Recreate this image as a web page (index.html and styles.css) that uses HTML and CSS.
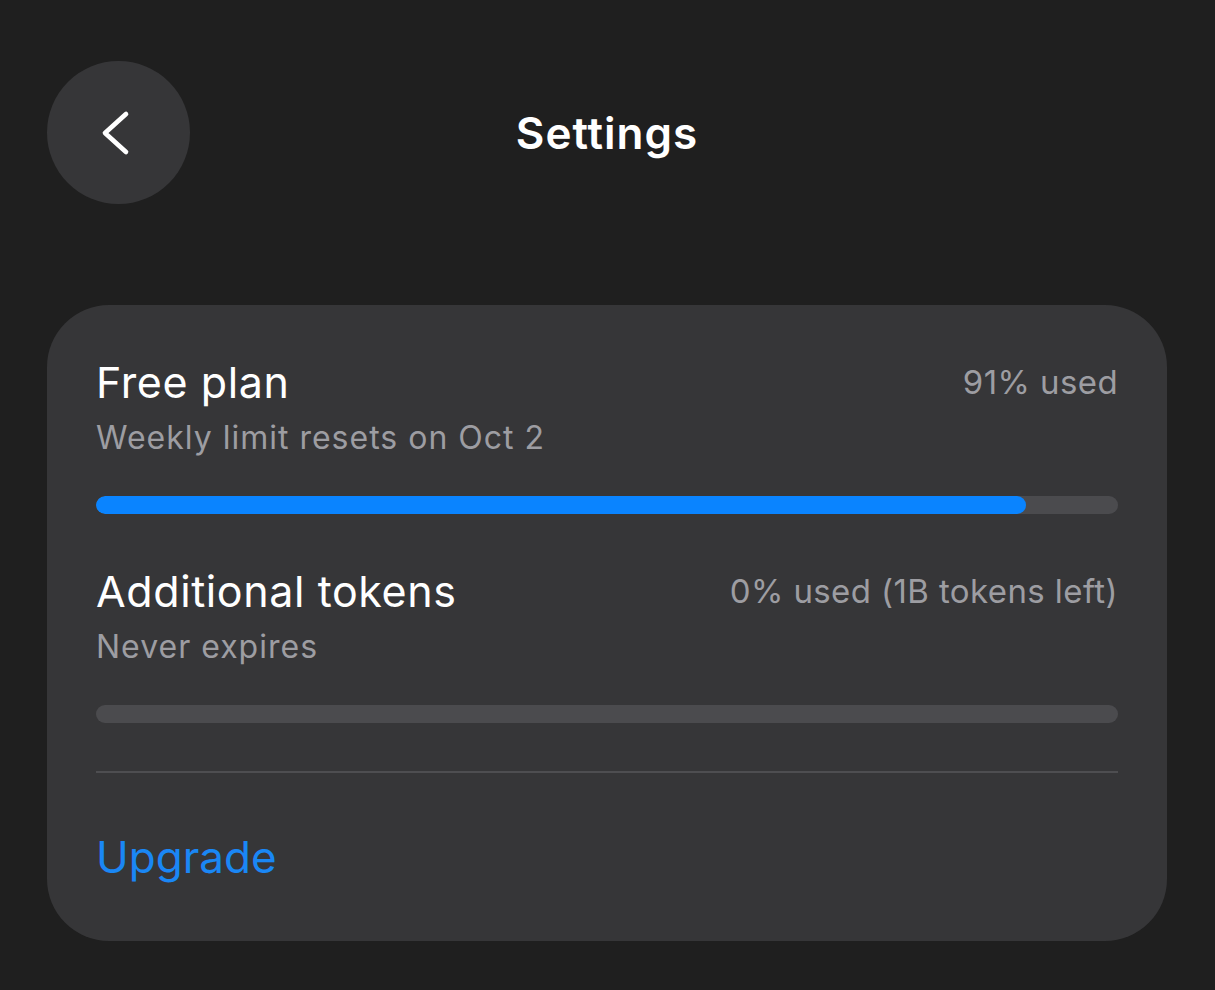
FILE: index.html
```html
<!DOCTYPE html>
<html lang="en">
<head>
<meta charset="utf-8">
<title>Settings</title>
<link rel="stylesheet" href="styles.css">
</head>
<body>
<div class="page">
  <header class="header">
    <button class="back" aria-label="Back">
      <svg viewBox="0 0 30 48" width="30" height="48" aria-hidden="true">
        <path d="M26 5 L5 24 L26 43" fill="none" stroke="#ffffff" stroke-width="4.7" stroke-linecap="round" stroke-linejoin="round"/>
      </svg>
    </button>
    <h1 class="title">Settings</h1>
    <div class="spacer"></div>
  </header>

  <section class="card">
    <div class="usage">
      <div class="usage-head">
        <span class="usage-name">Free plan</span>
        <span class="usage-value">91% used</span>
      </div>
      <div class="usage-sub">Weekly limit resets on Oct 2</div>
      <div class="bar"><div class="bar-fill" style="width: 91%"></div></div>
    </div>
    <div class="usage">
      <div class="usage-head">
        <span class="usage-name">Additional tokens</span>
        <span class="usage-value">0% used (1B tokens left)</span>
      </div>
      <div class="usage-sub">Never expires</div>
      <div class="bar"><div class="bar-fill" style="width: 0%"></div></div>
    </div>
    <div class="divider"></div>
    <a class="upgrade" href="#">Upgrade</a>
  </section>
</div>
</body>
</html>
```

FILE: styles.css
```css
html, body {
  margin: 0;
  padding: 0;
  background: #1f1f1f;
}

body {
  font-family: Inter, "Noto Sans", "Liberation Sans", sans-serif;
  color: #ffffff;
  -webkit-font-smoothing: antialiased;
}

.page {
  padding: 61px 48px 0 47px;
}

.header {
  display: grid;
  grid-template-columns: 143px 1fr 143px;
  align-items: center;
  height: 143px;
}

.back {
  width: 143px;
  height: 143px;
  border-radius: 50%;
  border: none;
  background: #363638;
  display: flex;
  align-items: center;
  justify-content: center;
  padding: 0;
  cursor: pointer;
}

.back svg {
  display: block;
  margin-right: 7px;
}

.title {
  margin: 0;
  text-align: center;
  font-size: 44px;
  font-weight: 600;
  line-height: 52px;
  letter-spacing: 1px;
  color: #ffffff;
}

.card {
  margin-top: 101px;
  background: #363638;
  border-radius: 62px;
  padding: 0 49px 57px 49px;
}

.usage {
  padding-top: 51px;
}

.usage-head {
  display: flex;
  justify-content: space-between;
  align-items: center;
  height: 52px;
}

.usage-name {
  font-size: 43px;
  line-height: 52px;
  font-weight: 400;
  letter-spacing: 0.6px;
  color: #ffffff;
}

.usage-value {
  font-size: 33px;
  line-height: 52px;
  letter-spacing: 0.4px;
  color: #9d9da2;
}

.usage-sub {
  margin-top: 10px;
  font-size: 32px;
  line-height: 40px;
  letter-spacing: 1px;
  color: #9d9da2;
}

.bar {
  margin-top: 38px;
  height: 18px;
  border-radius: 9px;
  background: #4b4b4e;
  overflow: hidden;
}

.bar-fill {
  height: 100%;
  border-radius: 9px;
  background: #0a84ff;
}

.divider {
  margin-top: 48px;
  height: 2px;
  background: #4e4e51;
}

.upgrade {
  display: block;
  margin-top: 57px;
  font-size: 44px;
  line-height: 54px;
  color: #1a87f5;
  text-decoration: none;
}
```
